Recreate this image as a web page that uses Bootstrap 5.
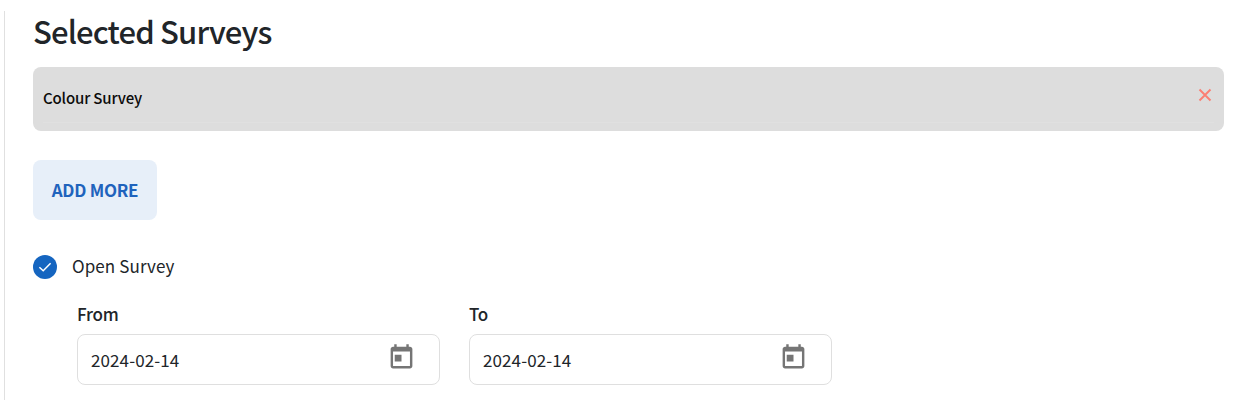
<!DOCTYPE html>
<html lang="en">
<head>
<meta charset="utf-8">
<title>Selected Surveys</title>
<link href="https://cdn.jsdelivr.net/npm/bootstrap@5.3.0/dist/css/bootstrap.min.css" rel="stylesheet">
<style>
html, body { height: 100%; overflow: hidden; }
body { font-family: "Noto Sans CJK SC", "Noto Sans", sans-serif; color: #212529; background: #fff; }
.page-pane { margin-left: 4px; height: 400px; border-left: 1px solid #e0e0e0; padding: 0 19px 0 28px; }
.page-title { font-size: 31px; font-weight: 500; line-height: 40px; letter-spacing: -0.85px; margin: 11px 0 16px; color: #212529; }
.survey-row { height: 64px; background: #dddddd; border-radius: 8px; padding: 0 12px 0 10px; position: relative; }
.survey-row::after { content: ""; position: absolute; left: 10px; right: 10px; bottom: 8px; height: 1px; background: #e0e0e0; }
.survey-name { font-size: 15px; font-weight: 500; line-height: 24px; letter-spacing: -0.15px; color: #0b0b0b; margin-top: -2px; }
.close-x { width: 14px; height: 14px; margin-top: -8px; }
.add-btn { width: 124px; height: 60px; margin-top: 29px; background: #e7eff9; color: #1f63bd; border: 0; border-radius: 8px; font-size: 17px; font-weight: 700; line-height: 24px; letter-spacing: -0.25px; padding: 0 0 1px; }
.add-btn:hover { background: #e7eff9; color: #1f63bd; }
.check-row { margin-top: 34px; height: 26px; }
.check-dot { width: 24px; height: 24px; border-radius: 50%; background: #1565c0; flex: none; }
.check-label { margin-left: 15px; font-size: 17px; line-height: 26px; letter-spacing: 0.1px; color: #212529; margin-top: -3px; }
.date-row { margin: 21px 0 0 44px; gap: 29px; }
.date-col { width: 363px; }
.date-label { display: block; font-size: 17px; font-weight: 500; line-height: 26px; letter-spacing: -0.2px; margin: 0 0 7px; color: #212529; }
.date-box { height: 51px; border: 1px solid #dfdfdf; border-radius: 8px; padding: 0 23px 0 13px; }
.date-value { font-size: 17px; letter-spacing: 0.1px; line-height: 24px; color: #212529; }
.cal-icon { width: 29px; height: 29px; fill: #757575; margin-top: -5px; }
</style>
</head>
<body>
<div class="page-pane">
  <h1 class="page-title">Selected Surveys</h1>
  <div class="survey-row d-flex align-items-center justify-content-between">
    <span class="survey-name">Colour Survey</span>
    <svg class="close-x" viewBox="0 0 14 14" aria-label="Remove"><path d="M1.5 1.5l11 11M12.5 1.5l-11 11" stroke="#fb7f73" stroke-width="1.9" fill="none"/></svg>
  </div>
  <button type="button" class="btn add-btn d-block">ADD MORE</button>
  <div class="check-row d-flex align-items-center">
    <span class="check-dot d-flex align-items-center justify-content-center">
      <svg width="16" height="16" viewBox="0 0 16 16"><path d="M2.4 8.2l3.8 3.6 7.4-7.6" stroke="#fff" stroke-width="1.5" fill="none"/></svg>
    </span>
    <span class="check-label">Open Survey</span>
  </div>
  <div class="date-row d-flex">
    <div class="date-col">
      <label class="date-label">From</label>
      <div class="date-box d-flex align-items-center justify-content-between">
        <span class="date-value">2024-02-14</span>
        <svg class="cal-icon" viewBox="0 0 24 24"><path d="M12 9.7H6.4v5.6H12zM16 1v2H8V1H6v2H5C3.9 3 3 3.9 3 5v14c0 1.1.9 2 2 2h14c1.1 0 2-.9 2-2V5c0-1.1-.9-2-2-2h-1V1zm3 18H5V7h14z"/></svg>
      </div>
    </div>
    <div class="date-col">
      <label class="date-label">To</label>
      <div class="date-box d-flex align-items-center justify-content-between">
        <span class="date-value">2024-02-14</span>
        <svg class="cal-icon" viewBox="0 0 24 24"><path d="M12 9.7H6.4v5.6H12zM16 1v2H8V1H6v2H5C3.9 3 3 3.9 3 5v14c0 1.1.9 2 2 2h14c1.1 0 2-.9 2-2V5c0-1.1-.9-2-2-2h-1V1zm3 18H5V7h14z"/></svg>
      </div>
    </div>
  </div>
</div>
<script src="https://cdn.jsdelivr.net/npm/bootstrap@5.3.0/dist/js/bootstrap.bundle.min.js"></script>
</body>
</html>
